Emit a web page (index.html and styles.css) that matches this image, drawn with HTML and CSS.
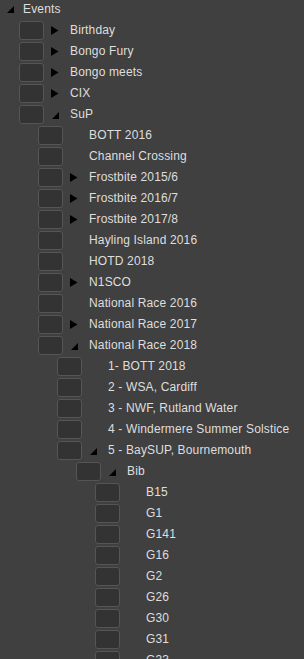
FILE: index.html
```html
<!DOCTYPE html>
<html lang="en">
<head>
  <meta charset="UTF-8">
  <meta name="viewport" content="width=device-width, initial-scale=1.0">
  <title>Events</title>
  <link rel="stylesheet" href="styles.css">
</head>
<body>
  <div class="tree">
    <!-- root -->
    <div class="row root">
      <span class="toggle"><svg width="8" height="8" viewBox="0 0 8 8"><polygon points="7,0 7,7 0,7"/></svg></span>
      <span class="label">Events</span>
    </div>

    <div class="row lvl1"><span class="box"></span><span class="toggle"><svg class="closed" width="8" height="9" viewBox="0 0 8 9"><polygon points="0,0 7.5,4.5 0,9"/></svg></span><span class="label">Birthday</span></div>
    <div class="row lvl1"><span class="box"></span><span class="toggle"><svg class="closed" width="8" height="9" viewBox="0 0 8 9"><polygon points="0,0 7.5,4.5 0,9"/></svg></span><span class="label">Bongo Fury</span></div>
    <div class="row lvl1"><span class="box"></span><span class="toggle"><svg class="closed" width="8" height="9" viewBox="0 0 8 9"><polygon points="0,0 7.5,4.5 0,9"/></svg></span><span class="label">Bongo meets</span></div>
    <div class="row lvl1"><span class="box"></span><span class="toggle"><svg class="closed" width="8" height="9" viewBox="0 0 8 9"><polygon points="0,0 7.5,4.5 0,9"/></svg></span><span class="label">CIX</span></div>
    <div class="row lvl1"><span class="box"></span><span class="toggle"><svg class="open" width="8" height="8" viewBox="0 0 8 8"><polygon points="7,0 7,7 0,7"/></svg></span><span class="label">SuP</span></div>

    <div class="row lvl2"><span class="box"></span><span class="toggle"></span><span class="label">BOTT 2016</span></div>
    <div class="row lvl2"><span class="box"></span><span class="toggle"></span><span class="label">Channel Crossing</span></div>
    <div class="row lvl2"><span class="box"></span><span class="toggle"><svg class="closed" width="8" height="9" viewBox="0 0 8 9"><polygon points="0,0 7.5,4.5 0,9"/></svg></span><span class="label">Frostbite 2015/6</span></div>
    <div class="row lvl2"><span class="box"></span><span class="toggle"><svg class="closed" width="8" height="9" viewBox="0 0 8 9"><polygon points="0,0 7.5,4.5 0,9"/></svg></span><span class="label">Frostbite 2016/7</span></div>
    <div class="row lvl2"><span class="box"></span><span class="toggle"><svg class="closed" width="8" height="9" viewBox="0 0 8 9"><polygon points="0,0 7.5,4.5 0,9"/></svg></span><span class="label">Frostbite 2017/8</span></div>
    <div class="row lvl2"><span class="box"></span><span class="toggle"></span><span class="label">Hayling Island 2016</span></div>
    <div class="row lvl2"><span class="box"></span><span class="toggle"></span><span class="label">HOTD 2018</span></div>
    <div class="row lvl2"><span class="box"></span><span class="toggle"><svg class="closed" width="8" height="9" viewBox="0 0 8 9"><polygon points="0,0 7.5,4.5 0,9"/></svg></span><span class="label">N1SCO</span></div>
    <div class="row lvl2"><span class="box"></span><span class="toggle"></span><span class="label">National Race 2016</span></div>
    <div class="row lvl2"><span class="box"></span><span class="toggle"><svg class="closed" width="8" height="9" viewBox="0 0 8 9"><polygon points="0,0 7.5,4.5 0,9"/></svg></span><span class="label">National Race 2017</span></div>
    <div class="row lvl2"><span class="box"></span><span class="toggle"><svg class="open" width="8" height="8" viewBox="0 0 8 8"><polygon points="7,0 7,7 0,7"/></svg></span><span class="label">National Race 2018</span></div>

    <div class="row lvl3"><span class="box"></span><span class="toggle"></span><span class="label">1- BOTT 2018</span></div>
    <div class="row lvl3"><span class="box"></span><span class="toggle"></span><span class="label">2 - WSA, Cardiff</span></div>
    <div class="row lvl3"><span class="box"></span><span class="toggle"></span><span class="label">3 - NWF, Rutland Water</span></div>
    <div class="row lvl3"><span class="box"></span><span class="toggle"></span><span class="label">4 - Windermere Summer Solstice</span></div>
    <div class="row lvl3"><span class="box"></span><span class="toggle"><svg class="open" width="8" height="8" viewBox="0 0 8 8"><polygon points="7,0 7,7 0,7"/></svg></span><span class="label">5 - BaySUP, Bournemouth</span></div>

    <div class="row lvl4"><span class="box"></span><span class="toggle"><svg class="open" width="8" height="8" viewBox="0 0 8 8"><polygon points="7,0 7,7 0,7"/></svg></span><span class="label">Bib</span></div>

    <div class="row lvl5"><span class="box"></span><span class="toggle"></span><span class="label">B15</span></div>
    <div class="row lvl5"><span class="box"></span><span class="toggle"></span><span class="label">G1</span></div>
    <div class="row lvl5"><span class="box"></span><span class="toggle"></span><span class="label">G141</span></div>
    <div class="row lvl5"><span class="box"></span><span class="toggle"></span><span class="label">G16</span></div>
    <div class="row lvl5"><span class="box"></span><span class="toggle"></span><span class="label">G2</span></div>
    <div class="row lvl5"><span class="box"></span><span class="toggle"></span><span class="label">G26</span></div>
    <div class="row lvl5"><span class="box"></span><span class="toggle"></span><span class="label">G30</span></div>
    <div class="row lvl5"><span class="box"></span><span class="toggle"></span><span class="label">G31</span></div>
    <div class="row lvl5"><span class="box"></span><span class="toggle"></span><span class="label">G33</span></div>
  </div>
</body>
</html>
```

FILE: styles.css
```css
* {
  box-sizing: border-box;
}

html, body {
  height: 100%;
}

body {
  margin: 0;
  overflow: hidden;
  background: #404040;
  color: #dedede;
  font-family: "Liberation Sans", Arial, sans-serif;
  font-size: 12px;
  letter-spacing: 0.15px;
}

.tree {
  margin-top: -1px;
}

.row {
  display: flex;
  align-items: center;
  height: 21px;
  white-space: nowrap;
}

.lvl1 { padding-left: 19px; }
.lvl2 { padding-left: 38px; }
.lvl3 { padding-left: 57px; }
.lvl4 { padding-left: 76px; }
.lvl5 { padding-left: 95px; }

.box {
  flex: none;
  width: 25px;
  height: 19px;
  margin-right: 7px;
  background: #333333;
  border: 1px solid #555555;
  border-radius: 3px;
}

.toggle {
  flex: none;
  display: flex;
  align-items: center;
  width: 19px;
  height: 21px;
}

.toggle svg {
  display: block;
  fill: #000;
}

.toggle svg.open {
  margin-left: 1px;
  margin-top: 3px;
}

.root .toggle {
  width: 16px;
  margin-left: 7px;
}

.root .toggle svg {
  margin-top: 1px;
}

.label {
  line-height: 21px;
}
```
